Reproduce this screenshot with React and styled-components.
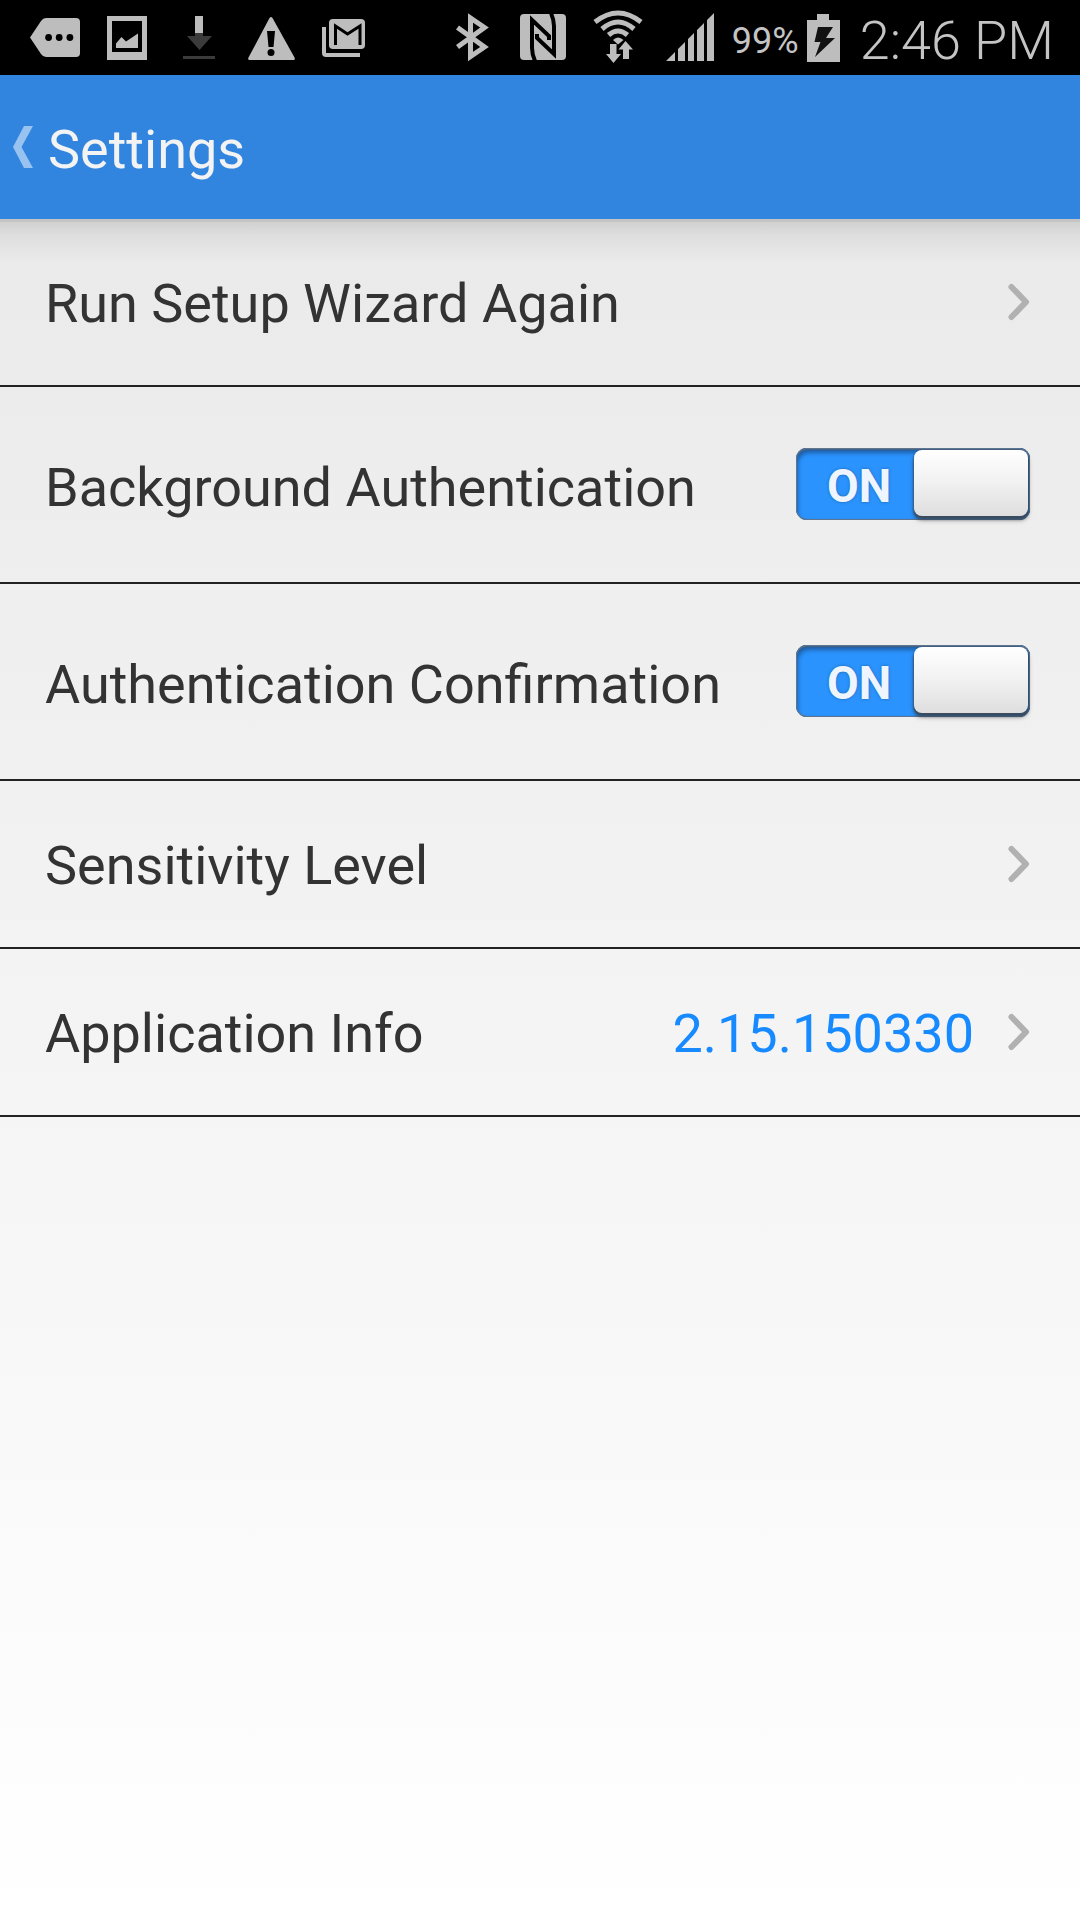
import React, { useState } from "react";
import styled, { createGlobalStyle } from "styled-components";

const GlobalStyle = createGlobalStyle`
  * { box-sizing: border-box; }
  html { height: 100%; }
  body {
    margin: 0;
    min-height: 100%;
    background: #fff;
    font-family: Roboto, "Liberation Sans", sans-serif;
  }
`;

const Screen = styled.div`
  display: flex;
  flex-direction: column;
  min-height: 100vh;
`;

const StatusBar = styled.div`
  display: flex;
  align-items: center;
  justify-content: space-between;
  height: 75px;
  padding: 0 26px 0 28px;
  background: #000;
  color: #c4c4c4;
`;

const StatusGroup = styled.div`
  display: flex;
  align-items: center;
  gap: ${(p) => p.$gap}px;
`;

const Glyph = styled.svg`
  display: block;
  flex: none;
  fill: #bdbdbd;
`;

const StatusText = styled.span`
  padding-top: 6px;
  font-size: ${(p) => p.$size}px;
  font-weight: ${(p) => p.$weight};
  line-height: 60px;
  white-space: nowrap;
`;

const Header = styled.header`
  display: flex;
  align-items: center;
  height: 144px;
  padding: 0 12px;
  background: #3185df;
`;

const BackButton = styled.button`
  display: flex;
  align-items: center;
  gap: 14px;
  padding: 0;
  border: 0;
  background: none;
  color: #f3f3f3;
  font: inherit;
`;

const Title = styled.span`
  padding-top: 6px;
  font-size: 54px;
  line-height: 64px;
`;

const Content = styled.main`
  flex: 1;
  background:
    linear-gradient(#c4c4c4 0 3px, transparent 3px),
    linear-gradient(rgba(0, 0, 0, 0.12), rgba(0, 0, 0, 0.05) 16px, transparent 44px),
    linear-gradient(#eaeaea, #fff);
`;

const List = styled.ul`
  margin: 0;
  padding: 0;
  list-style: none;
`;

const Item = styled.li`
  border-bottom: 2px solid #222;
`;

const Row = styled.div`
  display: flex;
  align-items: center;
  width: 100%;
  height: ${(p) => (p.$tall ? 195 : 166)}px;
  padding: 0 50px ${(p) => (p.$tall ? 2 : 0)}px 45px;
  border: 0;
  background: none;
  color: #333;
  font: inherit;
  font-size: 54px;
  line-height: 64px;
  text-align: left;
`;

const RowLabel = styled.span`
  flex: 1;
  padding-top: ${(p) => (p.$tall ? 8 : 4)}px;
`;

const RowValue = styled.span`
  margin-right: 34px;
  padding-top: 4px;
  color: #178aff;
`;

const ToggleFrame = styled.span`
  position: relative;
  display: flex;
`;

const ToggleInput = styled.input`
  appearance: none;
  display: flex;
  justify-content: flex-end;
  width: 234px;
  height: 72px;
  margin: 0;
  padding: 2px;
  border-radius: 11px;
  background: #2b93fd;
  box-shadow:
    inset 0 0 0 1px #5f7690,
    inset 0 2px 1px #4a6280,
    inset 2px 5px 4px #1e5ea6,
    inset -2px -1px 1px #2d5f96;

  &::before {
    content: "";
    width: 114px;
    height: 66px;
    border-radius: 8px;
    background: linear-gradient(#fff, #f1f1f1 50%, #dedede);
    box-shadow: 0 2px 2px #3b4c5e, 0 3px 3px #3b4c5e, 0 4px 5px rgba(0, 0, 0, 0.35);
  }

  &:not(:checked) {
    justify-content: flex-start;
    background: #b8b8b8;
  }
`;

const ToggleText = styled.span`
  position: absolute;
  top: 6px;
  left: ${(p) => (p.$on ? 31 : 134)}px;
  color: #eef5ff;
  font-size: 46px;
  font-weight: 700;
  line-height: 64px;
  text-shadow: 0 0 3px #1d62ac;
  pointer-events: none;
`;

function Chevron() {
  return (
    <Glyph width="22" height="38" viewBox="0 0 22 38" aria-hidden="true">
      <path d="M3.5 4 L18 19 L3.5 34" fill="none" stroke="#b1b1b1" strokeWidth="6" strokeLinecap="round" strokeLinejoin="round" />
    </Glyph>
  );
}

function LinkRow({ label, value }) {
  return (
    <Item>
      <Row as="button" type="button">
        <RowLabel>{label}</RowLabel>
        {value && <RowValue>{value}</RowValue>}
        <Chevron />
      </Row>
    </Item>
  );
}

function ToggleRow({ label }) {
  const [on, setOn] = useState(true);
  return (
    <Item>
      <Row as="label" $tall>
        <RowLabel $tall>{label}</RowLabel>
        <ToggleFrame>
          <ToggleInput type="checkbox" role="switch" aria-label={label} checked={on} onChange={(e) => setOn(e.target.checked)} />
          <ToggleText $on={on} aria-hidden="true">{on ? "ON" : "OFF"}</ToggleText>
        </ToggleFrame>
      </Row>
    </Item>
  );
}

function NotificationIcons() {
  return (
    <StatusGroup $gap={26}>
      <Glyph width="53" height="44" viewBox="28 16 53 44" aria-hidden="true">
        <path d="M30 37.5 L41 21 Q43 18 46 18 H76 Q80 18 80 22 V53 Q80 57 76 57 H46 Q43 57 41 54 Z" />
        <g fill="#000"><circle cx="48.6" cy="37.5" r="3.4" /><circle cx="59.2" cy="37.5" r="3.4" /><circle cx="69.9" cy="37.5" r="3.4" /></g>
      </Glyph>
      <Glyph width="40" height="44" viewBox="107 16 40 44" aria-hidden="true">
        <path fillRule="evenodd" d="M107 16 H147 V60 H107 Z M112 21 V52 H142 V21 Z" />
        <path d="M116 48 V43.500 L121.500 37 L126 41.500 L138 33.500 V48 Z" />
      </Glyph>
      <Glyph width="49" height="44" viewBox="173 16 49 44" aria-hidden="true">
        <path d="M195 16 H203 V33 H195 Z" />
        <path fill="#3b3b3b" d="M195 33 H203 V36 H212 L199.500 50 L187 36 H195 Z M183 56 H215 V59 H183 Z" />
      </Glyph>
      <Glyph width="47" height="44" viewBox="248 16 47 44" aria-hidden="true">
        <path d="M269.500 18 Q271 16 272.500 18 L294.500 57.500 Q295.500 60 293.500 60 H249.500 Q247.500 60 248.500 57.500 Z" />
        <path fill="#000" d="M267 31 H275 L273.500 47 H268.500 Z" />
        <circle cx="271" cy="52.500" r="3.500" fill="#000" />
      </Glyph>
      <Glyph width="44" height="44" viewBox="321 16 44 44" aria-hidden="true">
        <path d="M322 27 H326 V53 H360 V57 H326 Q322 57 322 53 Z" />
        <rect x="329" y="19" width="36" height="30" rx="4" />
        <path d="M335.500 45 V26 L347.500 34 L360 26 V45" fill="none" stroke="#000" strokeWidth="3" />
      </Glyph>
    </StatusGroup>
  );
}

function SystemIcons() {
  return (
    <StatusGroup $gap={20}>
      <StatusGroup $gap={8}>
        <Glyph width="272" height="56" viewBox="452 10 272 56" aria-hidden="true">
          <path d="M457.500 27.500 L484.500 47 L470.500 56.500 V18 L484.500 27.500 L457.500 47" fill="none" stroke="#bdbdbd" strokeWidth="5" />
          <rect x="520" y="14" width="46" height="46" rx="4" />
          <path d="M535 61 Q532 54 532 48 V20 L549 36 V40" fill="none" stroke="#000" strokeWidth="4" />
          <path d="M551 13 Q554 20 554 26 V54 L537 38 V34" fill="none" stroke="#000" strokeWidth="4" />
          <g fill="none" stroke="#bdbdbd" strokeWidth="5">
            <path d="M595 22 Q618 4 641 22" />
            <path d="M602 29 Q618 15 634 29" />
            <path d="M608.500 35 Q618 27 627.500 35" />
          </g>
          <path d="M613 40 Q618 35 623.500 40 L618 44.500 Z" />
          <path d="M610 44 H616.500 V54 H621 L613.500 63 L606 54 H610 Z" />
          <path d="M625.500 41 L633 49.500 H629 V59 H623 V49.500 H618.500 Z" />
          <path d="M666 61 L675 52 V61 Z M678 49 L685 42 V61 H678 Z M688 39 L694 33 V61 H688 Z M697 30 L704 23 V61 H697 Z M707 20 L714 13 V61 H707 Z" />
        </Glyph>
        <StatusText $size={36} $weight={400}>99%</StatusText>
        <Glyph width="33" height="48" viewBox="807 12 33 48" aria-hidden="true">
          <path d="M817 12 H829 V18 H840 V60 H807 V18 H817 Z" />
          <path fill="#111" d="M818 25 H833 L826 36 H835 L815 55 L820.500 40 H814.500 Z" />
        </Glyph>
      </StatusGroup>
      <StatusText $size={54} $weight={300}>2:46 PM</StatusText>
    </StatusGroup>
  );
}

export default function App() {
  return (
    <Screen>
      <GlobalStyle />
      <StatusBar>
        <NotificationIcons />
        <SystemIcons />
      </StatusBar>
      <Header>
        <BackButton type="button">
          <Glyph width="22" height="42" viewBox="0 0 22 42" aria-hidden="true">
            <path d="M12 0 H21 L9.500 21 L21 42 H12 L1 21 Z" fill="#98c2f0" />
          </Glyph>
          <Title>Settings</Title>
        </BackButton>
      </Header>
      <Content>
        <List>
          <LinkRow label="Run Setup Wizard Again" />
          <ToggleRow label="Background Authentication" />
          <ToggleRow label="Authentication Confirmation" />
          <LinkRow label="Sensitivity Level" />
          <LinkRow label="Application Info" value="2.15.150330" />
        </List>
      </Content>
    </Screen>
  );
}
